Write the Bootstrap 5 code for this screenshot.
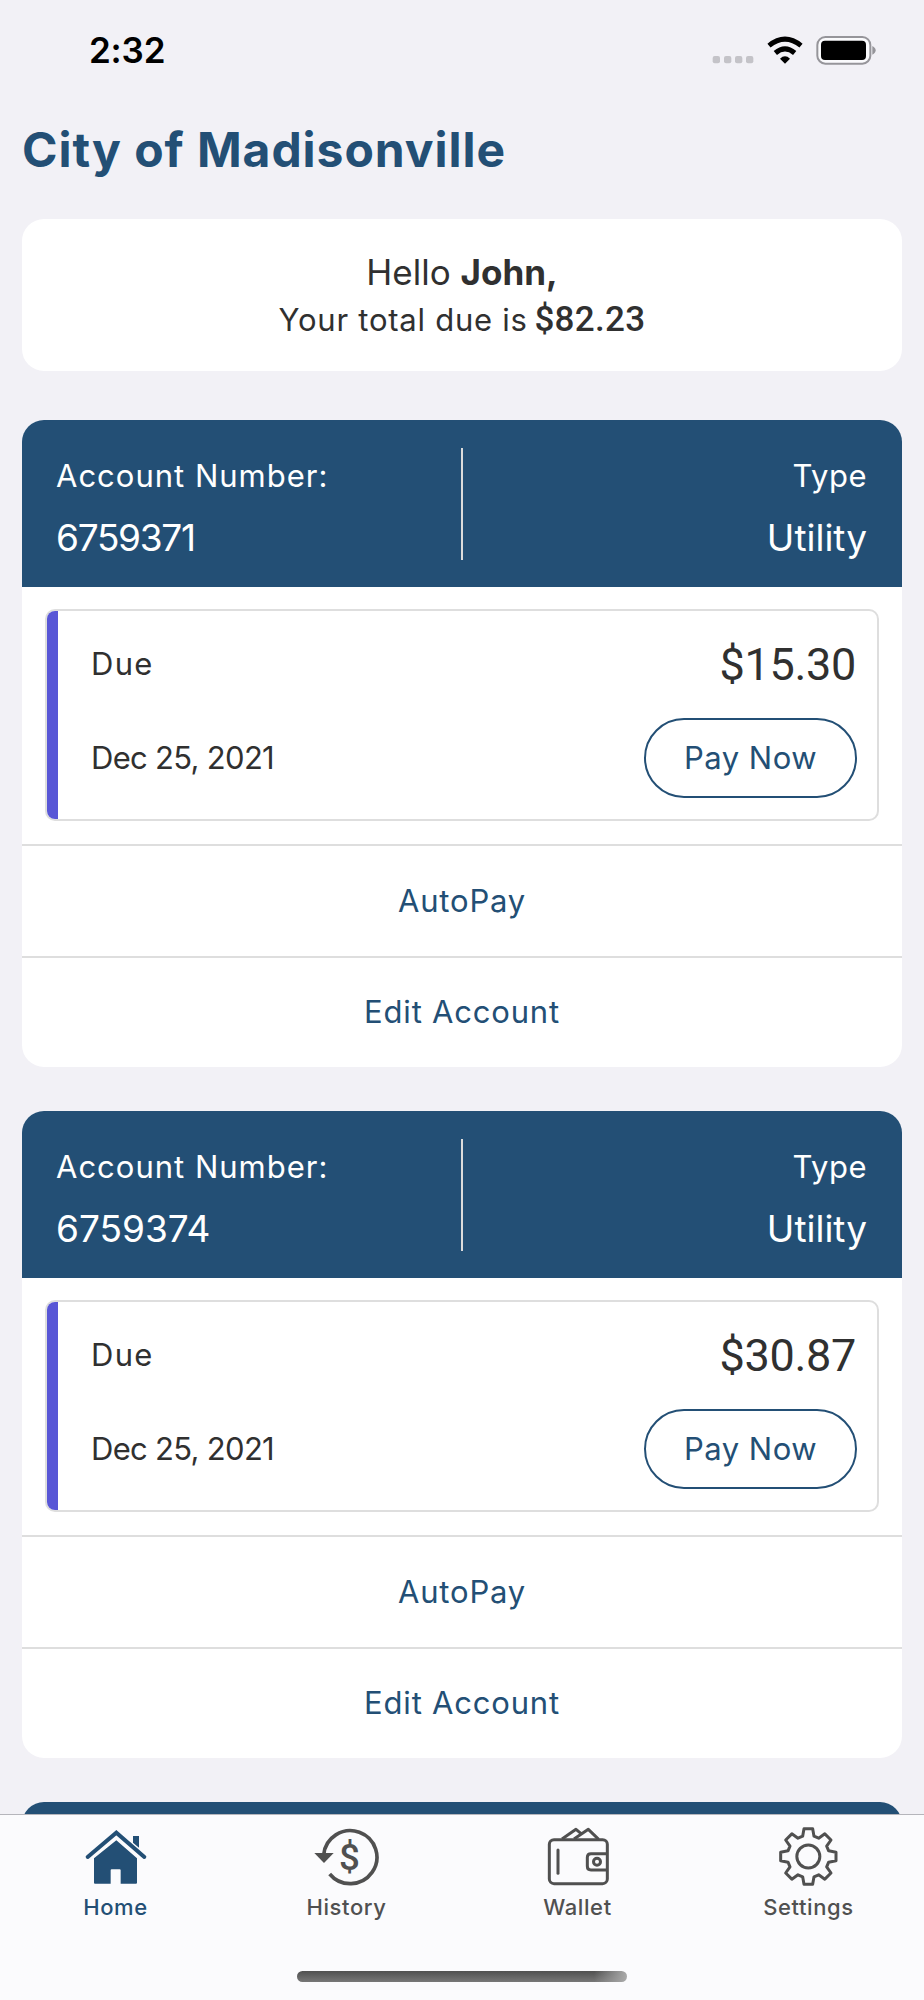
<!DOCTYPE html>
<html lang="en">
<head>
<meta charset="utf-8">
<meta name="viewport" content="width=device-width, initial-scale=1">
<title>City of Madisonville</title>
<link href="https://cdn.jsdelivr.net/npm/bootstrap@5.3.0/dist/css/bootstrap.min.css" rel="stylesheet">
<style>
  :root { --navy: #234f75; --ink: #303030; --page: #f2f1f6; --rule: #dedede; }
  body { height: 2000px; background: var(--page); color: var(--ink); font-family: Inter, "Open Sans", sans-serif; font-size: 31px; overflow: hidden; }
  .app { height: 2000px; padding: 0 22px; overflow: hidden; }
  .statusbar { height: 101px; flex: none; margin: 0 -22px; padding: 0 48px 0 89px; color: #000; }
  .clock { font-size: 35px; font-weight: 600; letter-spacing: -.2px; }
  .signals { height: 101px; }
  .city { font-size: 48px; font-weight: 700; line-height: 98px; letter-spacing: .95px; color: var(--navy); margin: 0 0 20px; }
  .city, .greeting, .acct { white-space: nowrap; flex: none; }
  .greeting { height: 152px; padding-top: 30px; border-radius: 22px; line-height: 47px; margin-bottom: 49px; }
  .hello { font-size: 35px; }
  .sum-label { letter-spacing: .75px; }
  .total { font: 500 35px/47px Roboto, sans-serif; letter-spacing: .3px; margin-left: -2px; }
  .acct { height: 647px; border-radius: 22px; margin-bottom: 44px; overflow: hidden; }
  .acct-head { height: 167px; background: var(--navy); color: #fff; padding: 25px 35px 0 34px; line-height: 62px; }
  .acct-label { letter-spacing: 1px; }
  .acct-kind { letter-spacing: .5px; }
  .acct-big { font-size: 37px; }
  .num-tight { letter-spacing: -1.3px; }
  .split { width: 2px; height: 112px; background: #dcdcdc; margin-top: 3px; }
  .due-box { height: 212px; margin: 22px 23px 23px; border: 2px solid var(--rule); border-radius: 10px; padding: 0 20px 0 44px; overflow: hidden; position: relative; }
  .due-box::before { content: ""; position: absolute; left: 0; top: 0; bottom: 0; width: 11px; background: #5856d6; }
  .due-row { height: 107px; }
  .due-word { letter-spacing: 1.3px; }
  .due-date { letter-spacing: -.7px; }
  .amount { font: 400 45px/1 Roboto, sans-serif; letter-spacing: -.3px; padding-right: 1px; }
  .pay { width: 213px; height: 80px; font-size: 31px; letter-spacing: .5px; color: var(--navy); border: 2px solid var(--navy); padding: 0; }
  .act { height: 111.5px; border-top: 2px solid var(--rule); color: var(--navy); text-decoration: none; letter-spacing: .8px; }
  .tabs { height: 186px; background: #fbfbfd; border-top: 1px solid #b5b5bb; padding-top: 12px; z-index: 5; }
  .tab { color: #505050; font-size: 22px; font-weight: 500; line-height: 26px; letter-spacing: .6px; text-decoration: none; }
  .tab svg { width: 67px; height: 60px; margin-bottom: 7px; }
  .tab.on { color: var(--navy); }
  .indicator { width: 330px; height: 11px; border-radius: 6px; margin-top: 51px; background: linear-gradient(90deg, transparent 90%, #aaa), linear-gradient(#505050, #777); }
</style>
</head>
<body>
<main class="app d-flex flex-column">
  <header class="statusbar d-flex align-items-center justify-content-between">
    <span class="clock">2:32</span>
    <svg class="signals" width="166" viewBox="60 -60 498 303" fill="none">
      <g fill="#c4c3c8"><rect x="68" y="108" width="22" height="22" rx="6"/><rect x="102" y="108" width="22" height="22" rx="6"/><rect x="135" y="108" width="22" height="22" rx="6"/><rect x="168" y="108" width="22" height="22" rx="6"/></g>
      <g stroke="#000" stroke-width="15"><path d="M237 77Q285 38 333 77"/><path d="M256 99Q285 74 314 99"/></g>
      <path d="M270 116Q285 102 300 116L285 131Z" fill="#000"/>
      <rect x="382" y="51" width="159" height="80" rx="24" fill="#fafafc" stroke="#96959a" stroke-width="6"/>
      <rect x="393" y="62" width="135" height="58" rx="12" fill="#000"/>
      <path d="M547 78Q557 83 557 91T547 104Z" fill="#96959a"/>
    </svg>
  </header>
  <h1 class="city">City of Madisonville</h1>
  <section class="greeting bg-white text-center">
    <div class="hello">Hello <b>John,</b></div>
    <div><span class="sum-label">Your total due is</span> <span class="total">$82.23</span></div>
  </section>

  <section class="acct bg-white">
    <div class="acct-head d-flex justify-content-between">
      <div class="col"><div class="acct-label">Account Number:</div><div class="acct-big num-tight">6759371</div></div>
      <div class="split"></div>
      <div class="col text-end"><div class="acct-kind">Type</div><div class="acct-big">Utility</div></div>
    </div>
    <div class="due-box">
      <div class="due-row d-flex align-items-center justify-content-between"><span class="due-word">Due</span><span class="amount">$15.30</span></div>
      <div class="d-flex align-items-center justify-content-between"><span class="due-date">Dec 25, 2021</span><button class="btn pay rounded-pill">Pay Now</button></div>
    </div>
    <a class="act d-flex align-items-center justify-content-center" href="#">AutoPay</a>
    <a class="act d-flex align-items-center justify-content-center" href="#">Edit Account</a>
  </section>

  <section class="acct bg-white">
    <div class="acct-head d-flex justify-content-between">
      <div class="col"><div class="acct-label">Account Number:</div><div class="acct-big">6759374</div></div>
      <div class="split"></div>
      <div class="col text-end"><div class="acct-kind">Type</div><div class="acct-big">Utility</div></div>
    </div>
    <div class="due-box">
      <div class="due-row d-flex align-items-center justify-content-between"><span class="due-word">Due</span><span class="amount">$30.87</span></div>
      <div class="d-flex align-items-center justify-content-between"><span class="due-date">Dec 25, 2021</span><button class="btn pay rounded-pill">Pay Now</button></div>
    </div>
    <a class="act d-flex align-items-center justify-content-center" href="#">AutoPay</a>
    <a class="act d-flex align-items-center justify-content-center" href="#">Edit Account</a>
  </section>

  <section class="acct bg-white"><div class="acct-head"></div></section>
</main>
<nav class="tabs fixed-bottom">
  <div class="d-flex text-center">
    <a class="tab on col-3" href="#"><svg viewBox="246 261 201 180" fill="currentColor"><path d="M263 351L349 278L433 351" fill="none" stroke="currentColor" stroke-width="12" stroke-linecap="round"/><path d="M349 301L411 355V428Q411 431 408 431H362V391Q362 388 359 388H335Q332 388 332 391V431H285Q282 431 282 428V355ZM399 288H417V323L399 308Z"/></svg><div>Home</div></a>
    <a class="tab col-3" href="#"><svg viewBox="939 261 201 180" fill="none" stroke="currentColor" stroke-width="11"><path d="M971 345A80 79.500 0 1 1 989 402"/><path d="M943 339H1001L972 369Z" fill="currentColor" stroke="none"/><text x="1048" y="391" text-anchor="middle" font-family="Roboto" font-size="110" font-weight="500" letter-spacing="0" fill="currentColor" stroke="none">$</text></svg><div>History</div></a>
    <a class="tab col-3" href="#"><svg viewBox="246 261 201 180" fill="none" stroke="currentColor" stroke-width="9"><rect x="262" y="299" width="174" height="132" rx="14"/><path d="M288 330V400" stroke-linecap="round"/><path d="M436 341H387Q376 341 376 352V379Q376 390 387 390H436"/><circle cx="405" cy="365" r="10.500"/><path d="M300 297L342 268L360 283M336 297L379 268L410 298" stroke-linejoin="round"/></svg><div>Wallet</div></a>
    <a class="tab col-3" href="#"><svg viewBox="939 261 201 180" fill="none" stroke="currentColor" stroke-width="9" stroke-linejoin="round"><g transform="translate(1039 349.500)"><circle r="34.500"/><path d="M-17-61L-13-83H13L17-61L31-55L49.500-68L68-49.500L55-31L61-17L83-13V13L61 17L55 31L68 49.500L49.500 68L31 55L17 61L13 83H-13L-17 61L-31 55L-49.500 68L-68 49.500L-55 31L-61 17L-83 13V-13L-61-17L-55-31L-68-49.500L-49.500-68L-31-55Z"/></g></svg><div>Settings</div></a>
  </div>
  <div class="indicator mx-auto"></div>
</nav>
<script src="https://cdn.jsdelivr.net/npm/bootstrap@5.3.0/dist/js/bootstrap.bundle.min.js"></script>
</body>
</html>
